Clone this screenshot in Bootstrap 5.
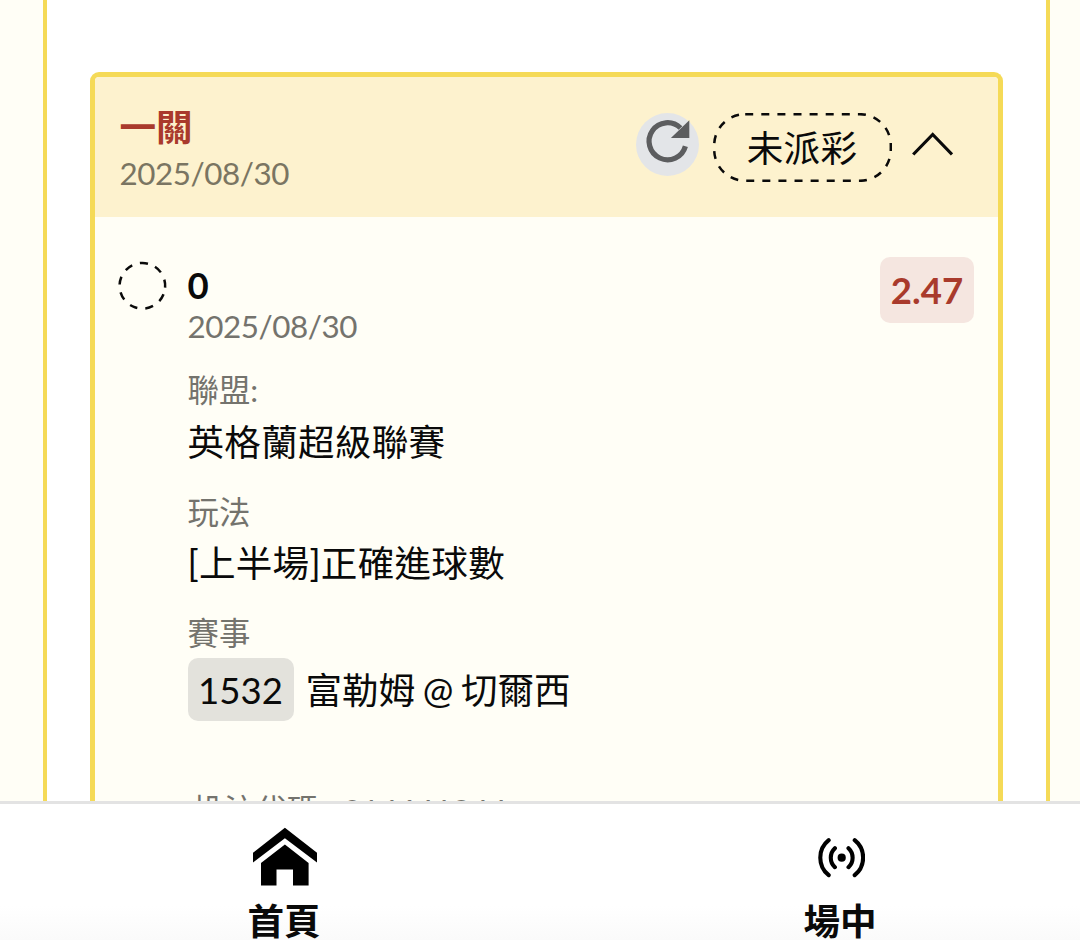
<!DOCTYPE html>
<html lang="zh-Hant">
<head>
<meta charset="utf-8">
<meta name="viewport" content="width=device-width, initial-scale=1">
<title>投注紀錄</title>
<link href="https://cdn.jsdelivr.net/npm/bootstrap@5.3.0/dist/css/bootstrap.min.css" rel="stylesheet">
<style>
body{font-family:Lato,"Noto Sans CJK TC",sans-serif;font-size:36.6px;line-height:44px;color:#0a0a0a;background:#fffef6}
.screen{height:940px}
.panel{margin:0 30px 0 43px;border:solid #f5da57;border-width:0 4.5px;padding:72px 43.5px 0 43px}
.slip{border:5px solid #f5da57;border-bottom:0;border-radius:9px 9px 0 0;background:#fffef6;height:729px}
.slip-head{height:139.5px;background:#fdf2ce;padding:28px 45px 0 24.4px}
.red{color:#a93a2c}
.sub{font-size:31.4px;line-height:38px;color:#74736d}
.date{letter-spacing:-.45px}
.slip-head .sub{color:#7a7562;margin-top:5px}
.reload{width:63px;height:63px;background:#e3e5e8;margin-top:8px}
.pill{width:179px;height:69px;margin:8px 0 0 14px}
.pill span{line-height:70px;letter-spacing:.25px}
.outline{position:absolute;inset:0}
.chev{margin:26px 0 0 20px}
.slip-body{padding:40px 24px 0 23px}
.ring{margin-top:4px}
.info{margin-left:20.5px;padding-top:6px}
.odds{width:94px;height:66px;border-radius:10px;background:#f5e6e0;line-height:67px;padding-left:1px}
.l1{margin-top:26.5px}
.v1{margin-top:10.5px;letter-spacing:.25px}
.l2{margin-top:29.5px}
.v2{margin-top:9.5px;letter-spacing:.25px}
.l3{margin-top:29px}
.v3{margin-top:6px;word-spacing:-1.8px}
.teams{padding-top:2px}
.code{margin:70px 0 0 5px;word-spacing:.5px}
.tag{width:106px;height:63px;border-radius:10px;background:#e3e2dc;line-height:65px;margin-right:12px}
.tabs{height:139px;border-top:3px solid #e3e3e3;background:linear-gradient(#fff 75%,#fafafa)}
.tabs svg{display:block;margin:0 auto}
.tab-home{width:568px;padding-top:22px}
.tab-home svg{margin-bottom:13px}
.tab-live{width:544px;padding-top:32px}
.tab-live svg{margin-bottom:19px}
</style>
</head>
<body>
<div class="screen d-flex flex-column overflow-hidden">
  <main class="flex-grow-1 overflow-hidden">
    <section class="panel bg-white">
      <article class="slip overflow-hidden">
        <header class="slip-head d-flex align-items-start">
          <div class="me-auto">
            <div class="red fw-bold">一關</div>
            <div class="sub date">2025/08/30</div>
          </div>
          <div class="reload rounded-circle">
            <svg class="d-block" width="63" height="63" viewBox="0 0 63 63"><path d="M49.4 33.2A18.5 18.5 0 1 1 44.5 15" fill="none" stroke="#5c5d5f" stroke-width="5.2"/><path d="M53.3 7.3v17.6H34.9z" fill="#5c5d5f"/></svg>
          </div>
          <div class="pill position-relative text-center">
            <svg class="outline" width="179" height="69"><rect x="1.2" y="1.2" width="176.6" height="66.6" rx="31" fill="none" stroke="#0a0a0a" stroke-width="2.5" stroke-dasharray="8 8.1"/></svg>
            <span>未派彩</span>
          </div>
          <svg class="chev" width="41" height="25" viewBox="0 0 41 25"><path d="M1.2 23.5 20.7 3.5 40 23.5" fill="none" stroke="#0a0a0a" stroke-width="3.2"/></svg>
        </header>
        <div class="slip-body d-flex align-items-start">
          <svg class="ring flex-shrink-0" width="49" height="49" viewBox="0 0 49 49"><circle cx="24.5" cy="24.8" r="22.8" fill="none" stroke="#0a0a0a" stroke-width="2.5" stroke-dasharray="8 7.92" transform="rotate(22 24.5 24.5)"/></svg>
          <div class="info flex-grow-1">
            <div class="fw-bold">0</div>
            <div class="sub date">2025/08/30</div>
            <div class="sub l1">聯盟:</div>
            <div class="v1">英格蘭超級聯賽</div>
            <div class="sub l2">玩法</div>
            <div class="v2">[上半場]正確進球數</div>
            <div class="sub l3">賽事</div>
            <div class="d-flex align-items-center v3"><span class="tag text-center">1532</span><span class="teams">富勒姆 @ 切爾西</span></div>
            <div class="sub code">投注代碼 : 214641944</div>
          </div>
          <div class="odds red fw-bold text-center">2.47</div>
        </div>
      </article>
    </section>
  </main>
  <nav class="tabs d-flex flex-shrink-0 fw-bold text-center overflow-hidden">
    <div class="tab-home flex-shrink-0">
      <svg width="66" height="60" viewBox="-1 -.5 66 60" overflow="visible"><path d="M32.9 1.3 65 26.3V36L32.9 11.7 1 36V26.3zM32.9 18 56.6 36.5V59H41V43H24.5V59H9V36.5z"/></svg>
      <div>首頁</div>
    </div>
    <div class="tab-live flex-shrink-0">
      <svg width="50" height="44" viewBox="-1 0 50 44" fill="none" stroke="#000" stroke-width="4.1" stroke-linecap="round"><circle cx="25.7" cy="21.7" r="4.1" fill="#000" stroke="none"/><path d="M18.9 12.2A13 13 0 0 0 18.9 31.2M32.5 12.2A13 13 0 0 1 32.5 31.2M12.7 4.2A22.4 22.4 0 0 0 12.7 39.2M38.7 4.2A22.4 22.4 0 0 1 38.7 39.2"/></svg>
      <div>場中</div>
    </div>
  </nav>
</div>
<script src="https://cdn.jsdelivr.net/npm/bootstrap@5.3.0/dist/js/bootstrap.bundle.min.js"></script>
</body>
</html>
